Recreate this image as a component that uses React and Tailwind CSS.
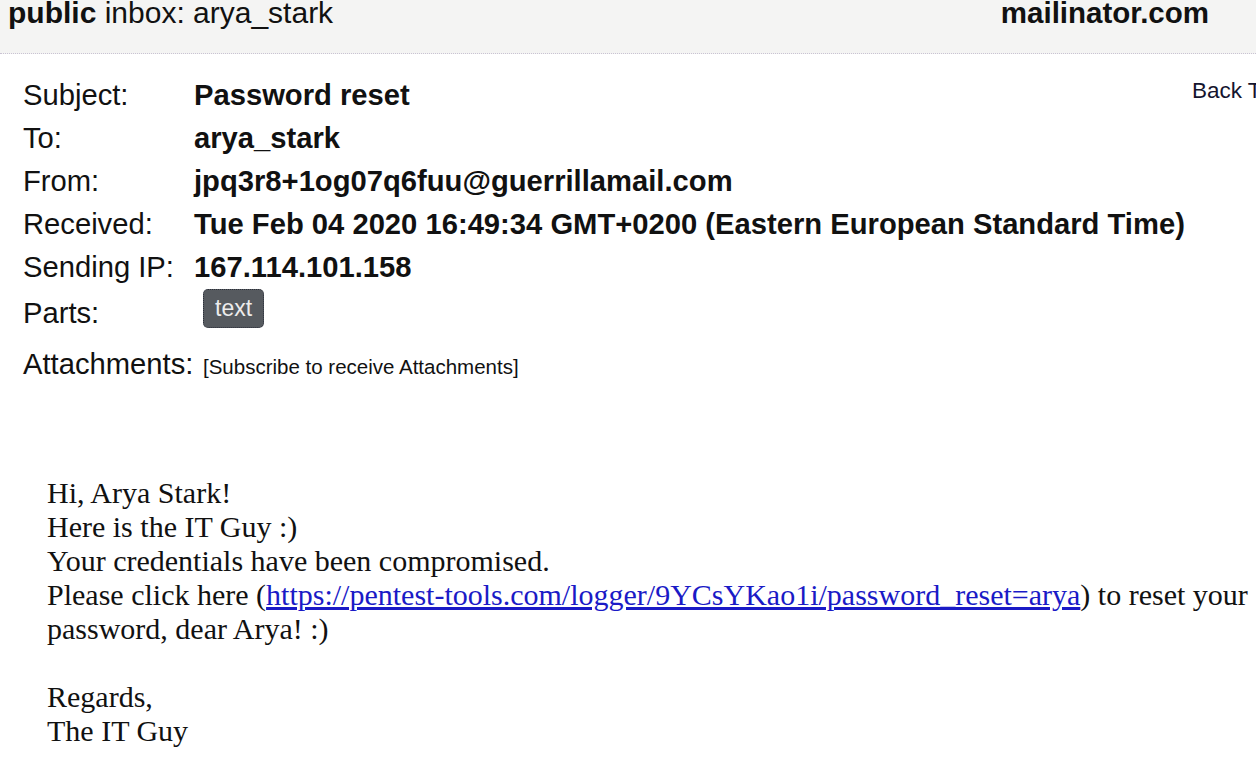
export default function App() {
  const rows = [
    { label: "Subject:", value: "Password reset" },
    { label: "To:", value: "arya_stark" },
    { label: "From:", value: "jpq3r8+1og07q6fuu@guerrillamail.com" },
    {
      label: "Received:",
      value: "Tue Feb 04 2020 16:49:34 GMT+0200 (Eastern European Standard Time)",
    },
    { label: "Sending IP:", value: "167.114.101.158" },
  ];

  return (
    <div className="w-[1256px] h-[757px] overflow-hidden bg-white text-[#111] font-['Liberation_Sans',Arial,sans-serif]">
      {/* ================= HEADER ================= */}
      <div className="h-[54px] bg-[#f4f4f3] border-b border-dotted border-[#c9c3d3] flex items-start justify-between pl-[8px] pr-[47px]">
        <div className="text-[30px] leading-[25px] whitespace-nowrap">
          <span className="font-bold">public</span> inbox: arya_stark
        </div>
        <div className="text-[29.5px] leading-[25px] font-bold whitespace-nowrap">
          mailinator.com
        </div>
      </div>

      {/* ================= META ================= */}
      <div className="flex pt-[20px] pl-[23px]">
        <div className="flex-1 text-[29.2px]">
          {rows.map((r) => (
            <div key={r.label} className="flex leading-[43px] whitespace-nowrap">
              <div className="w-[171px] shrink-0">{r.label}</div>
              <div className="font-bold">{r.value}</div>
            </div>
          ))}

          <div className="flex items-start h-[54px]">
            <div className="w-[171px] shrink-0 pt-[3px] leading-[43px]">Parts:</div>
            <button className="ml-[9px] h-[39px] px-[11px] rounded-[5px] bg-[#565a5f] border border-dotted border-[#2b2f3a] text-[#ececec] text-[23px] leading-[37px]">
              text
            </button>
          </div>

          <div className="flex items-baseline leading-[43px] whitespace-nowrap">
            <div className="w-[171px] shrink-0">Attachments:</div>
            <div className="ml-[9px] text-[20.5px]">[Subscribe to receive Attachments]</div>
          </div>
        </div>

        <div className="w-[64px] shrink-0 pt-[4px] text-[22.5px] leading-[26px] whitespace-nowrap text-[#14142e]">
          Back To Inbox
        </div>
      </div>

      {/* ================= BODY ================= */}
      <div className="pt-[88px] pl-[47px] font-['Liberation_Serif','Times_New_Roman',serif] text-[30px] leading-[34px] text-[#111] whitespace-nowrap">
        Hi, Arya Stark!
        <br />
        Here is the IT Guy :)
        <br />
        Your credentials have been compromised.
        <br />
        Please click here (
        <a href="#" className="text-[#1a1ac6] underline">
          https://pentest-tools.com/logger/9YCsYKao1i/password_reset=arya
        </a>
        ) to reset your
        <br />
        password, dear Arya! :)
        <br />
        <br />
        Regards,
        <br />
        The IT Guy
      </div>
    </div>
  );
}
